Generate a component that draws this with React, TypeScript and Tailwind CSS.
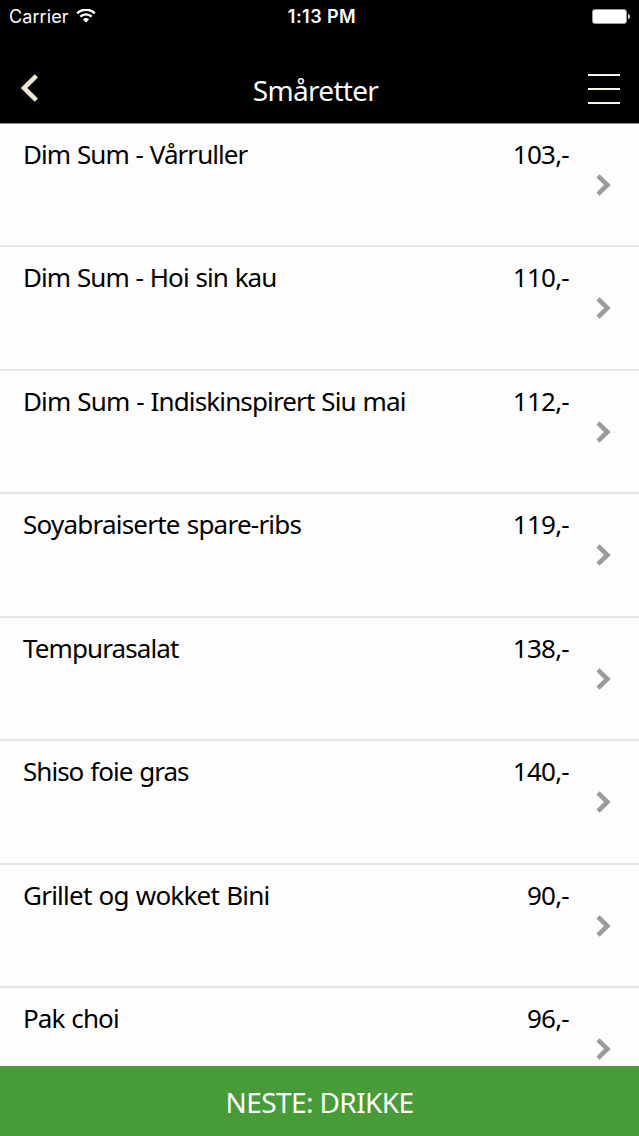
interface MenuItem {
  name: string
  price: string
  tracking: string
}

const items: MenuItem[] = [
  { name: "Dim Sum - Vårruller", price: "103,-", tracking: "tracking-[-0.95px]" },
  { name: "Dim Sum - Hoi sin kau", price: "110,-", tracking: "tracking-[-0.95px]" },
  { name: "Dim Sum - Indiskinspirert Siu mai", price: "112,-", tracking: "tracking-[-0.87px]" },
  { name: "Soyabraiserte spare-ribs", price: "119,-", tracking: "tracking-[-0.77px]" },
  { name: "Tempurasalat", price: "138,-", tracking: "tracking-[-0.9px]" },
  { name: "Shiso foie gras", price: "140,-", tracking: "tracking-[-0.97px]" },
  { name: "Grillet og wokket Bini", price: "90,-", tracking: "tracking-[-0.76px]" },
  { name: "Pak choi", price: "96,-", tracking: "tracking-[-0.9px]" },
]

function WifiIcon() {
  return (
    <svg className="h-[15px] w-5" viewBox="0 0 20 15" fill="none" stroke="white" strokeWidth="2.4">
      <path d="M1.2 4.3a12.6 12.6 0 0 1 17.6 0" />
      <path d="M4.3 7.7a8.2 8.2 0 0 1 11.4 0" />
      <path d="M10 13.5 7 10.5a4.4 4.4 0 0 1 6 0Z" fill="white" stroke="none" />
    </svg>
  )
}

function StatusBar() {
  return (
    <div className="grid h-8 grid-cols-3 items-center pl-[9px] pr-[9px] font-['Inter','Liberation_Sans',sans-serif] text-white">
      <div className="flex items-center gap-[7px]">
        <span className="pt-px text-[18px] leading-8 tracking-[0.1px]">Carrier</span>
        <WifiIcon />
      </div>
      <span className="pl-[5px] pt-px text-center text-[18px] font-semibold leading-8 tracking-[0.45px]">1:13 PM</span>
      <div className="flex items-center justify-end gap-px">
        <div className="h-[15px] w-[35px] rounded-[3px] border border-[#999] bg-white" />
        <div className="h-[5px] w-0.5 rounded-r-full bg-[#ccc]" />
      </div>
    </div>
  )
}

function NavBar() {
  return (
    <div className="grid h-[91.5px] grid-cols-[1fr_auto_1fr] items-center border-b border-[#8f8d90] pl-5 pr-[19px]">
      <button className="mt-[22px] w-5" aria-label="Tilbake">
        <svg className="h-7 w-5" viewBox="0 0 20 28" fill="none" stroke="#ece6d3" strokeWidth="4.6">
          <path d="M16.3 1.8 4 14l12.3 12.2" />
        </svg>
      </button>
      <h1 className="mr-[9px] mt-[25px] text-[28px] leading-8 tracking-[-0.7px] text-[#fafafa]">Småretter</h1>
      <button className="mt-[23px] flex flex-col gap-3 justify-self-end" aria-label="Meny">
        <span className="h-0.5 w-8 bg-[#f6f3ea]" />
        <span className="h-0.5 w-8 bg-[#f6f3ea]" />
        <span className="h-0.5 w-8 bg-[#f6f3ea]" />
      </button>
    </div>
  )
}

function MenuRow({ item }: { item: MenuItem }) {
  return (
    <li className="flex h-[123.5px] shrink-0 items-start border-b-2 border-[#e6e4e8] pl-[23px] pr-7 pt-[14px]">
      <span className={`flex-1 whitespace-nowrap text-[26px] leading-8 [word-spacing:1px] ${item.tracking}`}>
        {item.name}
      </span>
      <span className="text-[26px] leading-8 tracking-[-0.75px]">{item.price}</span>
      <svg className="ml-[27px] mt-9 h-[22px] w-[15px]" viewBox="0 0 15 22" fill="none" stroke="#9b9b9b" strokeWidth="4.6">
        <path d="M2 1.8 11.4 11 2 20.2" />
      </svg>
    </li>
  )
}

export default function App() {
  return (
    <div className="flex h-[1136px] w-[639px] flex-col overflow-hidden bg-[#fefdfe] font-['Noto_Sans','Open_Sans',sans-serif] text-black">
      <header className="shrink-0 bg-black">
        <StatusBar />
        <NavBar />
      </header>
      <ul className="flex min-h-0 flex-1 flex-col overflow-hidden">
        {items.map((item) => (
          <MenuRow key={item.name} item={item} />
        ))}
      </ul>
      <button className="h-[70px] shrink-0 bg-[#479b38] pt-px text-[28px] leading-8 tracking-[-0.6px] text-white">
        NESTE: DRIKKE
      </button>
    </div>
  )
}
